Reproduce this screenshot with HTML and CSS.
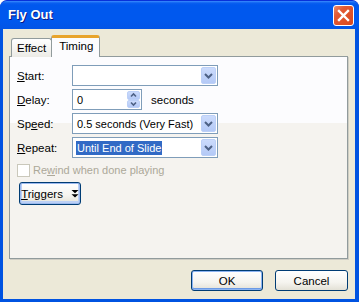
FILE: index.html
```html
<!DOCTYPE html>
<html lang="en">
<head>
    <meta charset="UTF-8">
    <title>Fly Out</title>
    <link rel="stylesheet" href="styles.css">
</head>
<body>
    <div class="window">
        <div class="titlebar">
            <span class="title">Fly Out</span>
            <span class="close">
                <svg width="13" height="13" viewBox="0 0 13 13"><path d="M2 2 L11 11 M11 2 L2 11" stroke="#fff" stroke-width="2.4" stroke-linecap="square"/></svg>
            </span>
        </div>
        <div class="client">
            <div class="tabs">
                <div class="tab">Effect</div>
                <div class="tab active">Timing</div>
            </div>
            <div class="panel">
                <div class="row">
                    <span class="label"><u>S</u>tart:</span>
                    <div class="combo">
                        <span class="value"></span>
                        <span class="drop"><svg width="15" height="17" viewBox="0 0 15 17"><path d="M4 7 L7.5 10.5 L11 7" fill="none" stroke="#4d6185" stroke-width="2"/></svg></span>
                    </div>
                </div>
                <div class="row">
                    <span class="label"><u>D</u>elay:</span>
                    <div class="spin">
                        <span class="value">0</span>
                        <span class="arrows">
                            <span class="arrow"><svg width="13" height="8" viewBox="0 0 13 8"><path d="M4 5.5 L6.5 3 L9 5.5" fill="none" stroke="#4d6185" stroke-width="1.6"/></svg></span>
                            <span class="arrow"><svg width="13" height="8" viewBox="0 0 13 8"><path d="M4 2.5 L6.5 5 L9 2.5" fill="none" stroke="#4d6185" stroke-width="1.6"/></svg></span>
                        </span>
                    </div>
                    <span class="unit">seconds</span>
                </div>
                <div class="row">
                    <span class="label">Sp<u>e</u>ed:</span>
                    <div class="combo">
                        <span class="value">0.5 seconds (Very Fast)</span>
                        <span class="drop"><svg width="15" height="17" viewBox="0 0 15 17"><path d="M4 7 L7.5 10.5 L11 7" fill="none" stroke="#4d6185" stroke-width="2"/></svg></span>
                    </div>
                </div>
                <div class="row">
                    <span class="label"><u>R</u>epeat:</span>
                    <div class="combo">
                        <span class="value"><span class="selected">Until End of Slide</span></span>
                        <span class="drop"><svg width="15" height="17" viewBox="0 0 15 17"><path d="M4 7 L7.5 10.5 L11 7" fill="none" stroke="#4d6185" stroke-width="2"/></svg></span>
                    </div>
                </div>
                <div class="check disabled">
                    <span class="box"></span>
                    <span>Re<u>w</u>ind when done playing</span>
                </div>
                <div class="triggers-wrap">
                    <span class="btn triggers">
                        <span><u>T</u>riggers</span>
                        <svg class="dbl" width="8" height="8" viewBox="0 0 8 8"><path d="M0.5 0 H7.5 L4 3.2 Z M0.5 4.2 H7.5 L4 7.6 Z" fill="#000"/></svg>
                    </span>
                </div>
            </div>
            <div class="footer">
                <span class="btn default">OK</span>
                <span class="btn">Cancel</span>
            </div>
        </div>
    </div>
</body>
</html>
```

FILE: styles.css
```css
* {
    margin: 0;
    padding: 0;
    box-sizing: border-box;
}

body {
    font-family: 'Liberation Sans', Arial, sans-serif;
    font-size: 11px;
    color: #000;
    background: #fff;
}

.window {
    width: 359px;
    height: 302px;
    display: flex;
    flex-direction: column;
    background: #0053e1;
    border-radius: 7px 7px 0 0;
    padding: 0 4px 3px 3px;
    border-top: 1px solid #0831d9;
}

.titlebar {
    height: 28px;
    display: flex;
    align-items: center;
    justify-content: space-between;
    background: linear-gradient(#3a8cff 0, #0a5fef 2px, #0058ee 4px, #0058ee 70%, #0255e6 100%);
    margin: 0 -4px 0 -3px;
    padding: 0 5px 0 8px;
    border-radius: 7px 7px 0 0;
}

.title {
    color: #fff;
    font-weight: bold;
    font-size: 13px;
    text-shadow: 1px 1px 0 #0a1883;
    padding-bottom: 1px;
}

.close {
    width: 21px;
    height: 21px;
    border: 1px solid #fff;
    border-radius: 3px;
    background: linear-gradient(135deg, #e98d6c 0, #e25a34 30%, #d9471d 100%);
    display: flex;
    align-items: center;
    justify-content: center;
}

.client {
    flex: 1;
    background: #ece9d8;
    padding: 6px 7px 0 6px;
    display: flex;
    flex-direction: column;
}

.tabs {
    display: flex;
    align-items: flex-end;
    padding-left: 2px;
    height: 22px;
    margin-bottom: -1px;
    position: relative;
    z-index: 1;
}

.tab {
    height: 19px;
    padding: 3px 5px 0 5px;
    border: 1px solid #919b9c;
    border-bottom: none;
    border-radius: 3px 3px 0 0;
    background: linear-gradient(#fff, #ecebe6);
    font-size: 11.5px;
}

.tab.active {
    height: 22px;
    padding: 2px 6px 0 7px;
    margin-left: -1px;
    background: #fcfcfe;
    border-top: 3px solid #e8a42c;
}

.panel {
    height: 203px;
    border: 1px solid #919b9c;
    box-shadow: 1px 1px 0 #cfcdc4;
    background: linear-gradient(#fcfcfe 0, #fcfcfe 66px, #f5f3ef 66px);
    padding: 8px 7px 0 7px;
    display: flex;
    flex-direction: column;
}

.row {
    display: flex;
    align-items: center;
    height: 21px;
    margin-bottom: 3px;
}

.label {
    width: 55px;
    font-size: 11.5px;
}

.combo,
.spin {
    height: 21px;
    border: 1px solid #7f9db9;
    background: #fff;
    display: flex;
    align-items: center;
    padding: 1px;
}

.combo {
    width: 146px;
}

.spin {
    width: 70px;
}

.value {
    flex: 1;
    padding-left: 3px;
    font-size: 11px;
    white-space: nowrap;
}

.selected {
    background: #316ac5;
    color: #fff;
    padding: 1px 1px;
    margin-left: -1px;
}

.drop {
    width: 15px;
    height: 17px;
    border-radius: 2px;
    background: linear-gradient(#cbdbfc, #b4c9f6);
    border: 1px solid #bcd0f7;
    display: flex;
    align-items: center;
    justify-content: center;
    flex-shrink: 0;
}

.drop svg {
    margin: -1px;
}

.arrows {
    display: flex;
    flex-direction: column;
    width: 13px;
    height: 17px;
    flex-shrink: 0;
}

.arrow {
    height: 8.5px;
    border-radius: 2px;
    background: linear-gradient(#cbdbfc, #b4c9f6);
    border: 1px solid #bcd0f7;
    display: flex;
    align-items: center;
    justify-content: center;
    overflow: hidden;
}

.arrow svg {
    margin: -1px;
}

.unit {
    margin-left: 9px;
    font-size: 11.5px;
}

.check {
    display: flex;
    align-items: center;
    height: 14px;
    margin-top: 2px;
    font-size: 11px;
}

.check.disabled {
    color: #aca899;
}

.box {
    width: 13px;
    height: 13px;
    border: 1px solid #cac8bb;
    background: #fff;
    margin-right: 3px;
}

.triggers-wrap {
    margin-top: 5px;
    padding-left: 2px;
    display: flex;
}

.btn {
    display: inline-flex;
    align-items: center;
    justify-content: center;
    height: 21px;
    border: 1px solid #003c74;
    border-radius: 3px;
    background: linear-gradient(#ffffff 0, #f5f4ef 60%, #e3e1d6 100%);
    font-size: 11.5px;
}

.triggers {
    width: 62px;
    height: 23px;
    gap: 8px;
    padding: 0 3px;
    box-shadow: inset 0 0 0 1px #9bb9ee, inset 0 -1px 0 2px #bcd0f5;
}

.dbl {
    flex-shrink: 0;
}

.footer {
    display: flex;
    justify-content: flex-end;
    gap: 12px;
    margin-top: 11px;
}

.footer .btn {
    width: 73px;
}

.footer .btn.default {
    width: 72px;
    box-shadow: inset 0 0 0 1px #8cb4f2, inset 0 -1px 0 1px #6d9be5;
}
```
